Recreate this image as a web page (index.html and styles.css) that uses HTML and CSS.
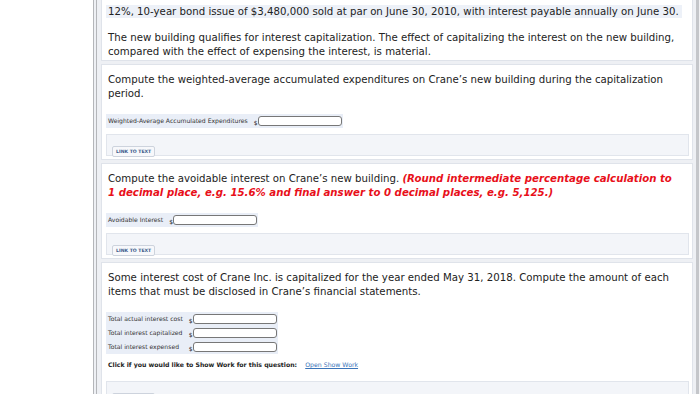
FILE: index.html
```html
<!DOCTYPE html>
<html lang="en">
  <head>
    <meta charset="UTF-8" />
    <meta name="viewport" content="width=device-width, initial-scale=1.0" />
    <link rel="stylesheet" href="styles.css">
  </head>
  <body>
    <div class="page">
      <div class="side"></div>
      <div class="main">
        <div class="card top">
          <p class="given">12%, 10-year bond issue of $3,480,000 sold at par on June 30, 2010, with interest payable annually on June 30.</p>
          <p class="text">The new building qualifies for interest capitalization. The effect of capitalizing the interest on the new building, compared with the effect of expensing the interest, is material.</p>
        </div>

        <div class="card">
          <p class="text">Compute the weighted-average accumulated expenditures on Crane’s new building during the capitalization period.</p>
          <table class="fields">
            <tr>
              <td class="label">Weighted-Average Accumulated Expenditures</td>
              <td class="cur">$</td>
              <td><input type="text" /></td>
            </tr>
          </table>
          <div class="links"><button type="button">LINK TO TEXT</button></div>
        </div>

        <div class="card">
          <p class="text">Compute the avoidable interest on Crane’s new building. <em class="note">(Round intermediate percentage calculation to 1 decimal place, e.g. 15.6% and final answer to 0 decimal places, e.g. 5,125.)</em></p>
          <table class="fields">
            <tr>
              <td class="label">Avoidable Interest</td>
              <td class="cur">$</td>
              <td><input type="text" /></td>
            </tr>
          </table>
          <div class="links"><button type="button">LINK TO TEXT</button></div>
        </div>

        <div class="card">
          <p class="text">Some interest cost of Crane Inc. is capitalized for the year ended May 31, 2018. Compute the amount of each items that must be disclosed in Crane’s financial statements.</p>
          <table class="fields">
            <tr>
              <td class="label">Total actual interest cost</td>
              <td class="cur">$</td>
              <td><input type="text" /></td>
            </tr>
            <tr>
              <td class="label">Total interest capitalized</td>
              <td class="cur">$</td>
              <td><input type="text" /></td>
            </tr>
            <tr>
              <td class="label">Total interest expensed</td>
              <td class="cur">$</td>
              <td><input type="text" /></td>
            </tr>
          </table>
          <p class="work">Click if you would like to Show Work for this question: <a href="#">Open Show Work</a></p>
          <div class="links"><button type="button">LINK TO TEXT</button></div>
        </div>
      </div>
      <div class="edge"></div>
    </div>
  </body>
</html>
```

FILE: styles.css
```css
html,
body {
  width: 100%;
  height: 100%;
}

body {
  margin: 0;
  background: #fff;
  font-family: "DejaVu Sans", Verdana, sans-serif;
  color: #222;
}

.page {
  display: flex;
  height: 394px;
  overflow: hidden;
}

.side {
  width: 93px;
  flex: none;
}

/* Main question panel */

.main {
  width: 592px;
  flex: none;
  background: #eef0f4;
  border-left: 4px double #b4b6ba;
  padding: 0 3px 0 4px;
}

.edge {
  flex: 1;
  border-left: 3px solid #c4c6ca;
  background: #f1f1f3;
}

.card {
  background: #fff;
  border: 1px solid #dfe3ea;
  padding: 8px 3px 3px 4px;
  margin-bottom: 3px;
}

.card.top {
  border-top: none;
  padding-top: 0;
  padding-bottom: 2px;
}

.card p {
  margin: 0;
}

.given {
  display: inline-block;
  background: #edf1f8;
  font-size: 10.2px;
  line-height: 13px;
  padding: 0 3px 0 2px;
}

.text {
  font-size: 10.2px;
  line-height: 13.5px;
  padding: 0 10px 0 2px;
}

.card.top .text {
  margin-top: 12px;
}

.note {
  color: #e8101a;
  font-weight: bold;
}

/* Answer fields */

.fields {
  border-collapse: collapse;
  margin-top: 14px;
  background: #e9eef7;
}

.fields tr {
  height: 14px;
}

.fields td {
  padding: 0;
  line-height: 8px;
  vertical-align: middle;
}

.fields .label {
  font-size: 6.1px;
  color: #333;
  padding: 0 6px 0 2px;
  white-space: nowrap;
}

.fields .cur {
  font-size: 6px;
  line-height: 6px;
  vertical-align: bottom;
  padding-bottom: 2px;
}

.fields input {
  display: block;
  width: 84px;
  height: 10px;
  box-sizing: border-box;
  border: 1px solid #777;
  border-radius: 3px;
  padding: 0;
  background: #fff;
  margin-right: 1px;
}

.work {
  font-size: 6.2px;
  line-height: 8px;
  font-weight: bold;
  margin-top: 7px !important;
  padding-left: 2px;
}

.work a {
  color: #3b74b8;
  font-weight: normal;
  margin-left: 6px;
}

.links {
  background: #f3f5f9;
  border: 1px solid #e1e5ec;
  margin-top: 6px;
  padding: 3px 5px;
  height: 14px;
}

.work + .links {
  margin-top: 12px;
}

.links button {
  font-family: inherit;
  font-size: 4.6px;
  font-weight: bold;
  color: #3b5a8a;
  background: #f7f8fb;
  border: 1px solid #cdd3dd;
  border-radius: 2px;
  padding: 2px 3px;
}
```
